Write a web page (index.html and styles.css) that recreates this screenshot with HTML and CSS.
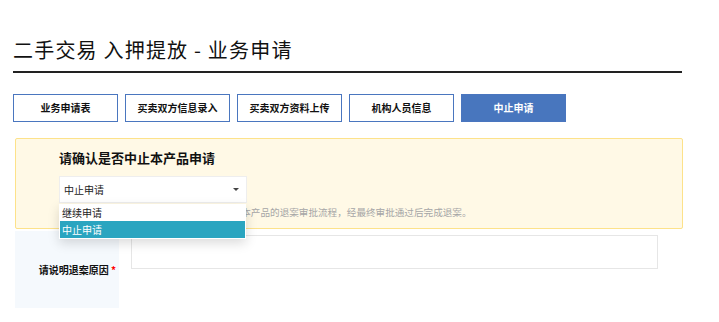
FILE: index.html
```html
<!DOCTYPE html>
<html lang="zh-CN">
<head>
  <meta charset="UTF-8">
  <meta name="viewport" content="width=device-width, initial-scale=1.0">
  <title>二手交易 入押提放 - 业务申请</title>
  <link rel="stylesheet" href="styles.css">
</head>
<body>
  <div class="page">
    <h1 class="title">二手交易 入押提放 - 业务申请</h1>

    <div class="tabs">
      <div class="tab">业务申请表</div>
      <div class="tab">买卖双方信息录入</div>
      <div class="tab">买卖双方资料上传</div>
      <div class="tab">机构人员信息</div>
      <div class="tab active">中止申请</div>
    </div>

    <div class="notice">
      <h2>请确认是否中止本产品申请</h2>
      <div class="select-wrap">
        <div class="select">
          <span>中止申请</span>
          <i class="caret"></i>
        </div>
        <ul class="options">
          <li>继续申请</li>
          <li class="on">中止申请</li>
        </ul>
      </div>
      <p class="hint">选择中止申请并提交后，系统将会自动发起本产品的退案审批流程，经最终审批通过后完成退案。</p>
    </div>

    <div class="form-row">
      <div class="form-label">请说明退案原因 <em>*</em></div>
      <div class="form-field">
        <div class="textbox"></div>
      </div>
    </div>
  </div>
</body>
</html>
```

FILE: styles.css
```css
* { box-sizing: border-box; }
body {
  margin: 0;
  font-family: "Noto Sans CJK SC", "Noto Sans", sans-serif;
  color: #222;
  background: #fff;
}
.page {
  width: 669px;
  margin-left: 13px;
}
.title {
  margin: 0;
  padding-top: 35px;
  padding-bottom: 6px;
  font-size: 20px;
  line-height: 30px;
  font-weight: normal;
  letter-spacing: 1.2px;
  color: #111;
  border-bottom: 2px solid #222;
}
.tabs {
  display: flex;
  gap: 7px;
  margin-top: 21px;
}
.tab {
  width: 105px;
  height: 28px;
  border: 1px solid #4a76bf;
  font-size: 10px;
  font-weight: bold;
  line-height: 26px;
  text-align: center;
  color: #111;
}
.tab.active {
  background: #4876be;
  color: #fff;
}
.notice {
  margin: 16px -1px 0 2px;
  height: 91px;
  padding: 10px 0 0 43px;
  background: #fff9e6;
  border: 1px solid #fde28a;
  border-radius: 2px;
}
.notice h2 {
  margin: 0;
  font-size: 13px;
  line-height: 18px;
  font-weight: bold;
  color: #111;
}
.select-wrap {
  position: relative;
  width: 188px;
  margin-top: 9px;
  z-index: 2;
}
.select {
  display: flex;
  align-items: center;
  justify-content: space-between;
  height: 27px;
  padding: 0 7px 0 4px;
  background: #fff;
  border: 1px solid #eee;
  font-size: 10px;
  color: #222;
}
.caret {
  width: 0;
  height: 0;
  border-left: 3px solid transparent;
  border-right: 3px solid transparent;
  border-top: 3px solid #444;
}
.options {
  position: absolute;
  top: 28px;
  left: 0;
  width: 187px;
  margin: 0;
  padding: 0 1px 1px;
  list-style: none;
  background: #fff;
  box-shadow: 0 4px 12px rgba(0, 0, 0, 0.15);
}
.options li {
  height: 17px;
  padding-left: 2px;
  font-size: 10px;
  line-height: 17px;
  color: #222;
}
.options li.on {
  background: #2aa5c0;
  color: #fff;
}
.hint {
  margin: 2px 0 0;
  font-size: 9.6px;
  line-height: 14px;
  color: #a6a6a6;
}
.form-row {
  display: flex;
  margin: 2px 0 0 2px;
}
.form-label {
  width: 104px;
  height: 77px;
  padding-right: 3px;
  background: #f5f9fd;
  font-size: 10px;
  font-weight: bold;
  line-height: 77px;
  text-align: right;
  color: #111;
}
.form-label em {
  font-style: normal;
  color: #f00;
}
.form-field {
  padding: 4px 0 0 12px;
}
.textbox {
  width: 527px;
  height: 34px;
  border: 1px solid #e6e6e6;
  background: #fff;
}
```
